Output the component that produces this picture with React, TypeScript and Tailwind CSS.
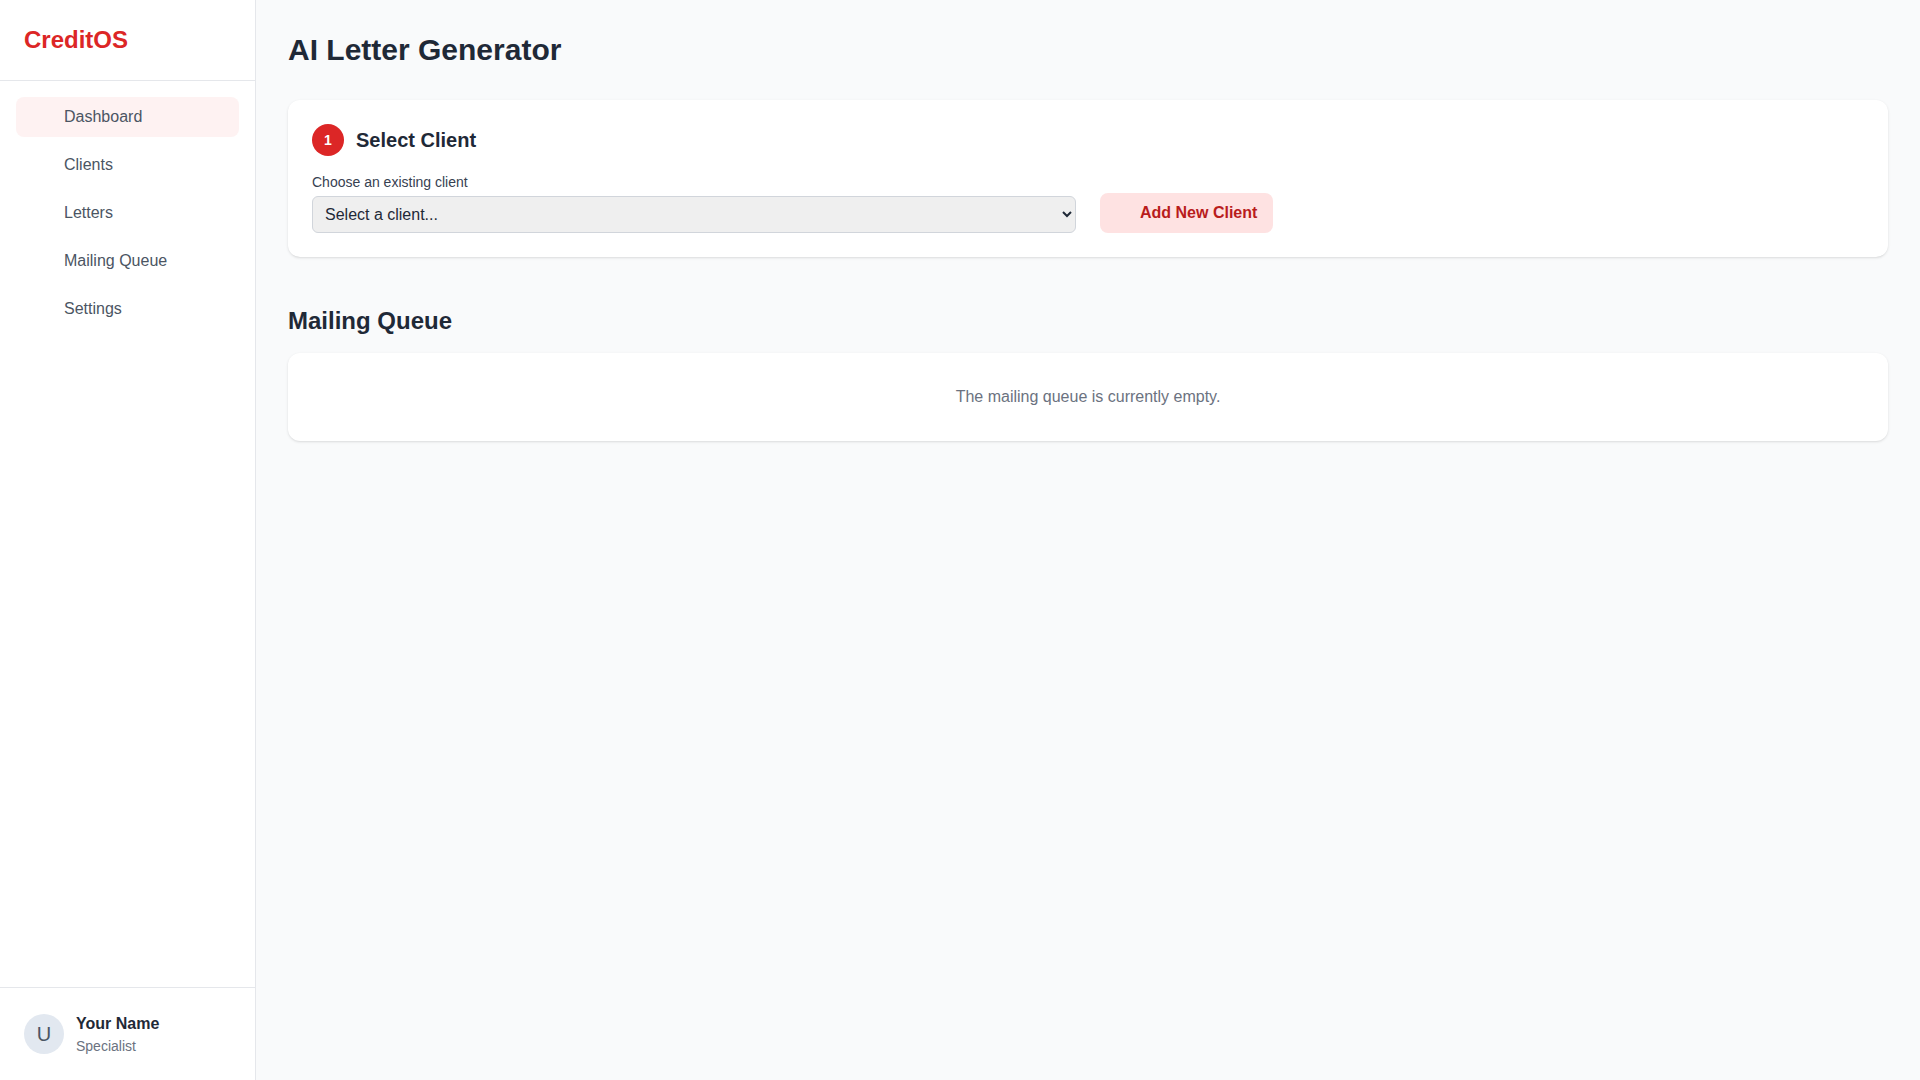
import React from "react";

const navItems = ["Dashboard", "Clients", "Letters", "Mailing Queue", "Settings"];

export default function App() {
  return (
    <div className="flex h-screen w-full bg-[#f9fafb] font-['Liberation_Sans',Arial,sans-serif] text-[#1f2937]">
      <aside className="flex w-64 shrink-0 flex-col border-r border-[#e5e7eb] bg-white">
        <div className="border-b border-[#e5e7eb] p-6">
          <h1 className="text-2xl font-bold text-[#dc2626]">CreditOS</h1>
        </div>
        <nav className="flex-1 space-y-2 p-4">
          {navItems.map((item, i) => (
            <a
              key={item}
              href="#"
              className={
                i === 0
                  ? "flex h-10 items-center gap-3 rounded-lg bg-[#fef2f2] px-4 text-base text-[#4b5563]"
                  : "flex h-10 items-center gap-3 rounded-lg px-4 text-base text-[#4b5563]"
              }
            >
              <span className="h-5 w-5 shrink-0" />
              <span>{item}</span>
            </a>
          ))}
        </nav>
        <div className="flex items-center gap-3 border-t border-[#e5e7eb] p-6">
          <div className="flex h-10 w-10 items-center justify-center rounded-full bg-[#e2e8f0] text-xl font-medium text-[#4b5563]">
            U
          </div>
          <div>
            <p className="text-base font-semibold text-[#1f2937]">Your Name</p>
            <p className="text-sm text-[#6b7280]">Specialist</p>
          </div>
        </div>
      </aside>
      <main className="flex-1 overflow-auto p-8">
        <h2 className="mb-8 text-3xl font-bold text-[#1f2937]">AI Letter Generator</h2>
        <section className="rounded-xl bg-white p-6 shadow-sm">
          <div className="mb-4 flex items-center gap-3">
            <div className="flex h-8 w-8 items-center justify-center rounded-full bg-[#dc2626] text-sm font-bold text-white">
              1
            </div>
            <h3 className="text-xl font-semibold text-[#1f2937]">Select Client</h3>
          </div>
          <div className="grid grid-cols-2 items-end gap-6">
            <div>
              <label className="mb-1 block text-sm text-[#374151]">Choose an existing client</label>
              <select className="w-full rounded-md border border-[#d1d5db] bg-[#efefef] px-2 py-2 text-base text-[#1f2937]">
                <option>Select a client...</option>
              </select>
            </div>
            <div>
              <button className="flex items-center gap-2 rounded-lg bg-[#fee2e2] px-4 py-2 text-base font-bold text-[#b91c1c]">
                <span className="h-4 w-4" />
                Add New Client
              </button>
            </div>
          </div>
        </section>
        <h2 className="mb-4 mt-12 text-2xl font-bold text-[#1f2937]">Mailing Queue</h2>
        <section className="rounded-xl bg-white p-8 text-center shadow-sm">
          <p className="text-base text-[#6b7280]">The mailing queue is currently empty.</p>
        </section>
      </main>
    </div>
  );
}
